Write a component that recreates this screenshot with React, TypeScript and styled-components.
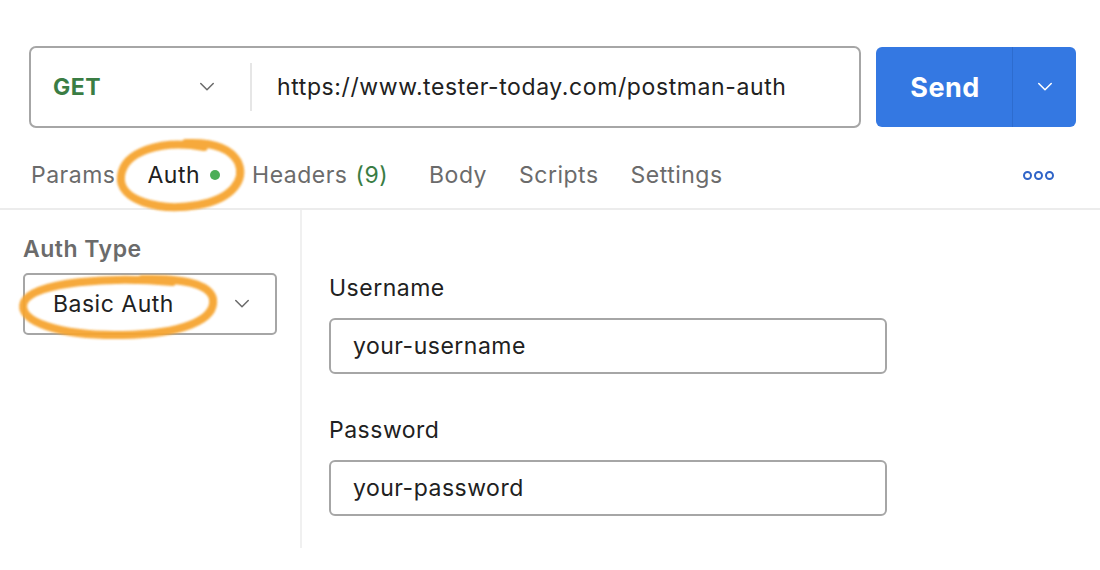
import React from 'react'
import styled, { createGlobalStyle } from 'styled-components'

const GlobalStyle = createGlobalStyle`
  html, body {
    margin: 0;
    padding: 0;
    background: #ffffff;
  }
  body {
    font-family: Inter, "Noto Sans", "Liberation Sans", sans-serif;
    color: #212121;
    letter-spacing: 0.5px;
  }
`

const Page = styled.div`
  width: 1100px;
  height: 570px;
  position: relative;
  overflow: hidden;
  background: #fff;
`

const TopRow = styled.div`
  display: flex;
  align-items: center;
  gap: 15px;
  padding: 46px 24px 0 29px;
`

const UrlBox = styled.div`
  display: flex;
  align-items: center;
  width: 832px;
  height: 82px;
  box-sizing: border-box;
  border: 2px solid #a6a6a6;
  border-radius: 7px;
`

const MethodSelect = styled.div`
  display: flex;
  align-items: center;
  justify-content: space-between;
  width: 221px;
  box-sizing: border-box;
  padding: 0 35px 0 22px;
  height: 48px;
  border-right: 2px solid #e6e6e6;
`

const MethodText = styled.span`
  font-size: 23px;
  font-weight: 700;
  color: #3a7d44;
`

const UrlText = styled.span`
  padding-left: 25px;
  font-size: 23px;
  letter-spacing: 0.6px;
  color: #212121;
`

const SendButton = styled.div`
  display: flex;
  width: 200px;
  height: 80px;
  border-radius: 6px;
  background: #3478e2;
  color: #fff;
  overflow: hidden;
`

const SendLabel = styled.div`
  flex: 1;
  display: flex;
  align-items: center;
  justify-content: center;
  font-size: 27px;
  font-weight: 700;
  padding-left: 2px;
`

const SendArrow = styled.div`
  width: 63px;
  display: flex;
  align-items: center;
  justify-content: center;
  border-left: 1px solid #2d6ccf;
`

const Tabs = styled.div`
  display: flex;
  align-items: center;
  height: 80px;
  padding: 0 46px 0 31px;
  border-bottom: 2px solid #ececec;
`

const Tab = styled.div<{ $active?: boolean }>`
  display: flex;
  align-items: center;
  margin-right: 32px;
  font-size: 23px;
  color: ${({ $active }) => ($active ? '#212121' : '#6b6b6b')};
  padding-top: 13px;
`

const Count = styled.span`
  color: #3a7d44;
  margin-left: 8px;
  margin-right: 9px;
`

const Dot = styled.span`
  width: 10px;
  height: 10px;
  border-radius: 50%;
  background: #4cae57;
  margin-left: 10px;
`

const More = styled.div`
  margin-left: auto;
  display: flex;
  gap: 2px;
  padding-top: 15px;
`

const Ring = styled.span`
  width: 5px;
  height: 5px;
  border-radius: 50%;
  border: 2.5px solid #2f64c8;
`

const Body = styled.div`
  display: grid;
  grid-template-columns: 302px 1fr;
  height: 338px;
`

const Sidebar = styled.div`
  border-right: 2px solid #f0f0f0;
  padding: 25px 0 0 23px;
`

const SideLabel = styled.div`
  font-size: 23px;
  font-weight: 600;
  color: #6b6b6b;
  margin-bottom: 10px;
`

const TypeSelect = styled.div`
  display: flex;
  align-items: center;
  justify-content: space-between;
  width: 254px;
  height: 62px;
  box-sizing: border-box;
  border: 2px solid #a6a6a6;
  border-radius: 5px;
  padding: 0 25px 0 28px;
  font-size: 23px;
  color: #212121;
`

const Fields = styled.div`
  padding: 64px 0 0 27px;
  display: flex;
  flex-direction: column;
`

const FieldLabel = styled.div`
  font-size: 23px;
  color: #212121;
  margin-bottom: 16px;
`

const Input = styled.div`
  width: 558px;
  height: 56px;
  box-sizing: border-box;
  border: 2px solid #a6a6a6;
  border-radius: 6px;
  display: flex;
  align-items: center;
  padding-left: 22px;
  font-size: 23px;
  color: #212121;
  margin-bottom: 42px;

  &:last-child {
    margin-bottom: 0;
  }
`

const Annotation = styled.svg`
  position: absolute;
  left: 0;
  top: 0;
  pointer-events: none;
`

const Chevron = ({ color = '#6b6b6b', size = 16 }: { color?: string; size?: number }) => (
  <svg width={size} height={size * 0.6} viewBox="0 0 16 10" fill="none">
    <path d="M1.5 1.5 L8 8 L14.5 1.5" stroke={color} strokeWidth="1.6" strokeLinecap="round" strokeLinejoin="round" />
  </svg>
)

const tabs = ['Params', 'Auth', 'Headers', 'Body', 'Scripts', 'Settings']

export default function App() {
  return (
    <Page>
      <GlobalStyle />
      <TopRow>
        <UrlBox>
          <MethodSelect>
            <MethodText>GET</MethodText>
            <Chevron />
          </MethodSelect>
          <UrlText>https://www.tester-today.com/postman-auth</UrlText>
        </UrlBox>
        <SendButton>
          <SendLabel>Send</SendLabel>
          <SendArrow>
            <Chevron color="#ffffff" />
          </SendArrow>
        </SendButton>
      </TopRow>

      <Tabs>
        {tabs.map((t) => (
          <Tab key={t} $active={t === 'Auth'}>
            {t}
            {t === 'Auth' && <Dot />}
            {t === 'Headers' && <Count>(9)</Count>}
          </Tab>
        ))}
        <More>
          <Ring />
          <Ring />
          <Ring />
        </More>
      </Tabs>

      <Body>
        <Sidebar>
          <SideLabel>Auth Type</SideLabel>
          <TypeSelect>
            Basic Auth
            <Chevron />
          </TypeSelect>
        </Sidebar>
        <Fields>
          <FieldLabel>Username</FieldLabel>
          <Input>your-username</Input>
          <FieldLabel>Password</FieldLabel>
          <Input>your-password</Input>
        </Fields>
      </Body>

      <Annotation width="1100" height="570" viewBox="0 0 1100 570">
        <defs>
          <filter id="soft" x="-20%" y="-20%" width="140%" height="140%">
            <feGaussianBlur stdDeviation="0.8" />
          </filter>
        </defs>
        <g fill="none" stroke="#f6a531" strokeLinecap="round" filter="url(#soft)" opacity="0.95">
          <path
            d="M204 147 C160 139 124 152 121 176 C118 200 158 212 198 205 C232 199 246 180 238 162 C230 147 212 142 186 143"
            strokeWidth="8"
          />
          <path
            d="M172 282 C110 276 34 282 24 302 C16 322 62 336 122 335 C182 334 216 320 213 299 C210 284 182 278 142 279"
            strokeWidth="8"
          />
        </g>
      </Annotation>
    </Page>
  )
}
